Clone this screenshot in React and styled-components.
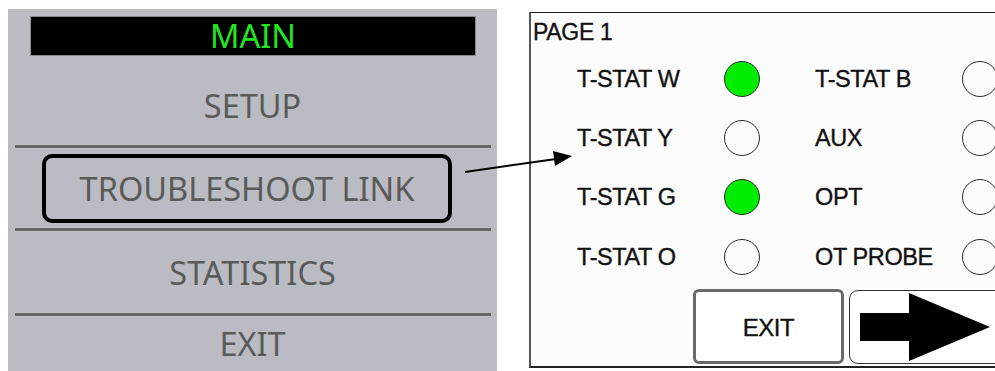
import React from "react";
import styled, { createGlobalStyle } from "styled-components";

const Global = createGlobalStyle`
  html, body { margin: 0; padding: 0; background: #ffffff; overflow: hidden; }
  body { width: 995px; height: 371px; }
`;

const Page = styled.div`
  position: relative;
  width: 995px;
  height: 371px;
  display: flex;
  align-items: flex-start;
  overflow: hidden;
`;

const MenuPanel = styled.div`
  margin: 9px 0 0 8px;
  width: 489px;
  height: 362px;
  background: #bbbbc3;
  display: flex;
  flex-direction: column;
  font-family: "Noto Sans", "Open Sans", sans-serif;
  flex-shrink: 0;
`;

const TitleBar = styled.div`
  margin: 7px 21px 0 22px;
  height: 38px;
  background: #000;
  border: 1px solid #8a8a8e;
  color: #22e622;
  font-size: 32.5px;
  line-height: 38px;
  text-align: center;
`;

const MenuRow = styled.div`
  height: ${(p) => p.$h}px;
  padding-top: ${(p) => p.$pt || 0}px;
  box-sizing: border-box;
  display: flex;
  align-items: center;
  justify-content: center;
  color: #5a5a5a;
  font-size: 32.5px;
`;

const Divider = styled.div`
  margin: 0 6px 0 7px;
  height: 3px;
  background: linear-gradient(#7a7a7e, #5a5a5a, #7a7a7e);
`;

const Highlight = styled.div`
  width: 402px;
  height: 61px;
  border: 4px solid #000;
  border-radius: 10px;
  display: flex;
  align-items: center;
  justify-content: center;
  margin-left: 26px;
  margin-right: 37px;
`;

const Screen = styled.div`
  margin: 12px 0 0 32px;
  width: 480px;
  height: 356px;
  box-sizing: border-box;
  background: #fcfcfc;
  border-top: 1px solid #222;
  border-left: 2px solid #555;
  border-bottom: 2px solid #222;
  display: flex;
  flex-direction: column;
  font-family: "Liberation Sans", Arial, sans-serif;
  color: #111;
  flex-shrink: 0;
  -webkit-text-stroke: 0.35px #111;
`;

const PageTitle = styled.div`
  font-size: 23px;
  line-height: 26px;
  padding: 6px 0 0 2px;
  height: 38px;
  box-sizing: border-box;
  letter-spacing: -0.3px;
`;

const StatusGrid = styled.div`
  display: grid;
  grid-template-columns: 147px 91px 147px 40px;
  grid-auto-rows: 59.3px;
  padding-left: 46px;
  align-items: center;
  margin-top: -2px;
`;

const Label = styled.div`
  font-size: 23.5px;
  line-height: 26px;
  white-space: nowrap;
  letter-spacing: -0.4px;
`;

const Lamp = styled.div`
  width: 34px;
  height: 34px;
  border-radius: 50%;
  border: 1.3px solid #2a2a2a;
  background: ${(p) => (p.$on ? "#00ec00" : "#fcfcfc")};
`;

const ButtonRow = styled.div`
  display: flex;
  gap: 5px;
  padding-left: 162px;
  margin-top: 3px;
`;

const ExitButton = styled.div`
  width: 152px;
  height: 75px;
  box-sizing: border-box;
  border: 3px solid #6a6a6a;
  border-radius: 6px;
  background: #fff;
  display: flex;
  align-items: center;
  justify-content: center;
  font-size: 24px;
  letter-spacing: -0.5px;
  padding-top: 2px;
`;

const NextButton = styled.div`
  width: 160px;
  height: 74px;
  margin-top: 1px;
  box-sizing: border-box;
  border: 1px solid #333;
  border-radius: 9px;
  background: #fff;
  flex-shrink: 0;
  display: flex;
  align-items: flex-start;
`;

const Connector = styled.svg`
  position: absolute;
  left: 0;
  top: 0;
  pointer-events: none;
`;

const rows = [
  ["T-STAT W", true, "T-STAT B", false],
  ["T-STAT Y", false, "AUX", false],
  ["T-STAT G", true, "OPT", false],
  ["T-STAT O", false, "OT PROBE", false],
];

export default function App() {
  return (
    <Page>
      <Global />
      <MenuPanel>
        <TitleBar>MAIN</TitleBar>
        <MenuRow $h={89} $pt={10}>SETUP</MenuRow>
        <Divider />
        <MenuRow $h={81}>
          <Highlight>TROUBLESHOOT LINK</Highlight>
        </MenuRow>
        <Divider />
        <MenuRow $h={82}>STATISTICS</MenuRow>
        <Divider />
        <MenuRow $h={55}>EXIT</MenuRow>
      </MenuPanel>
      <Screen>
        <PageTitle>PAGE 1</PageTitle>
        <StatusGrid>
          {rows.map(([a, aon, b, bon]) => (
            <React.Fragment key={a}>
              <Label>{a}</Label>
              <Lamp $on={aon} />
              <Label>{b}</Label>
              <Lamp $on={bon} />
            </React.Fragment>
          ))}
        </StatusGrid>
        <ButtonRow>
          <ExitButton>EXIT</ExitButton>
          <NextButton>
            <svg width="150" height="72" viewBox="0 0 150 72">
              <polygon
                points="10,22 59,22 59,2 140,36 59,70 59,50 10,50"
                fill="#000"
              />
            </svg>
          </NextButton>
        </ButtonRow>
      </Screen>
      <Connector width="995" height="371" viewBox="0 0 995 371">
        <line x1="465" y1="172" x2="556" y2="159" stroke="#000" strokeWidth="2" />
        <polygon points="572,156 553,151 555,166" fill="#000" />
      </Connector>
    </Page>
  );
}
